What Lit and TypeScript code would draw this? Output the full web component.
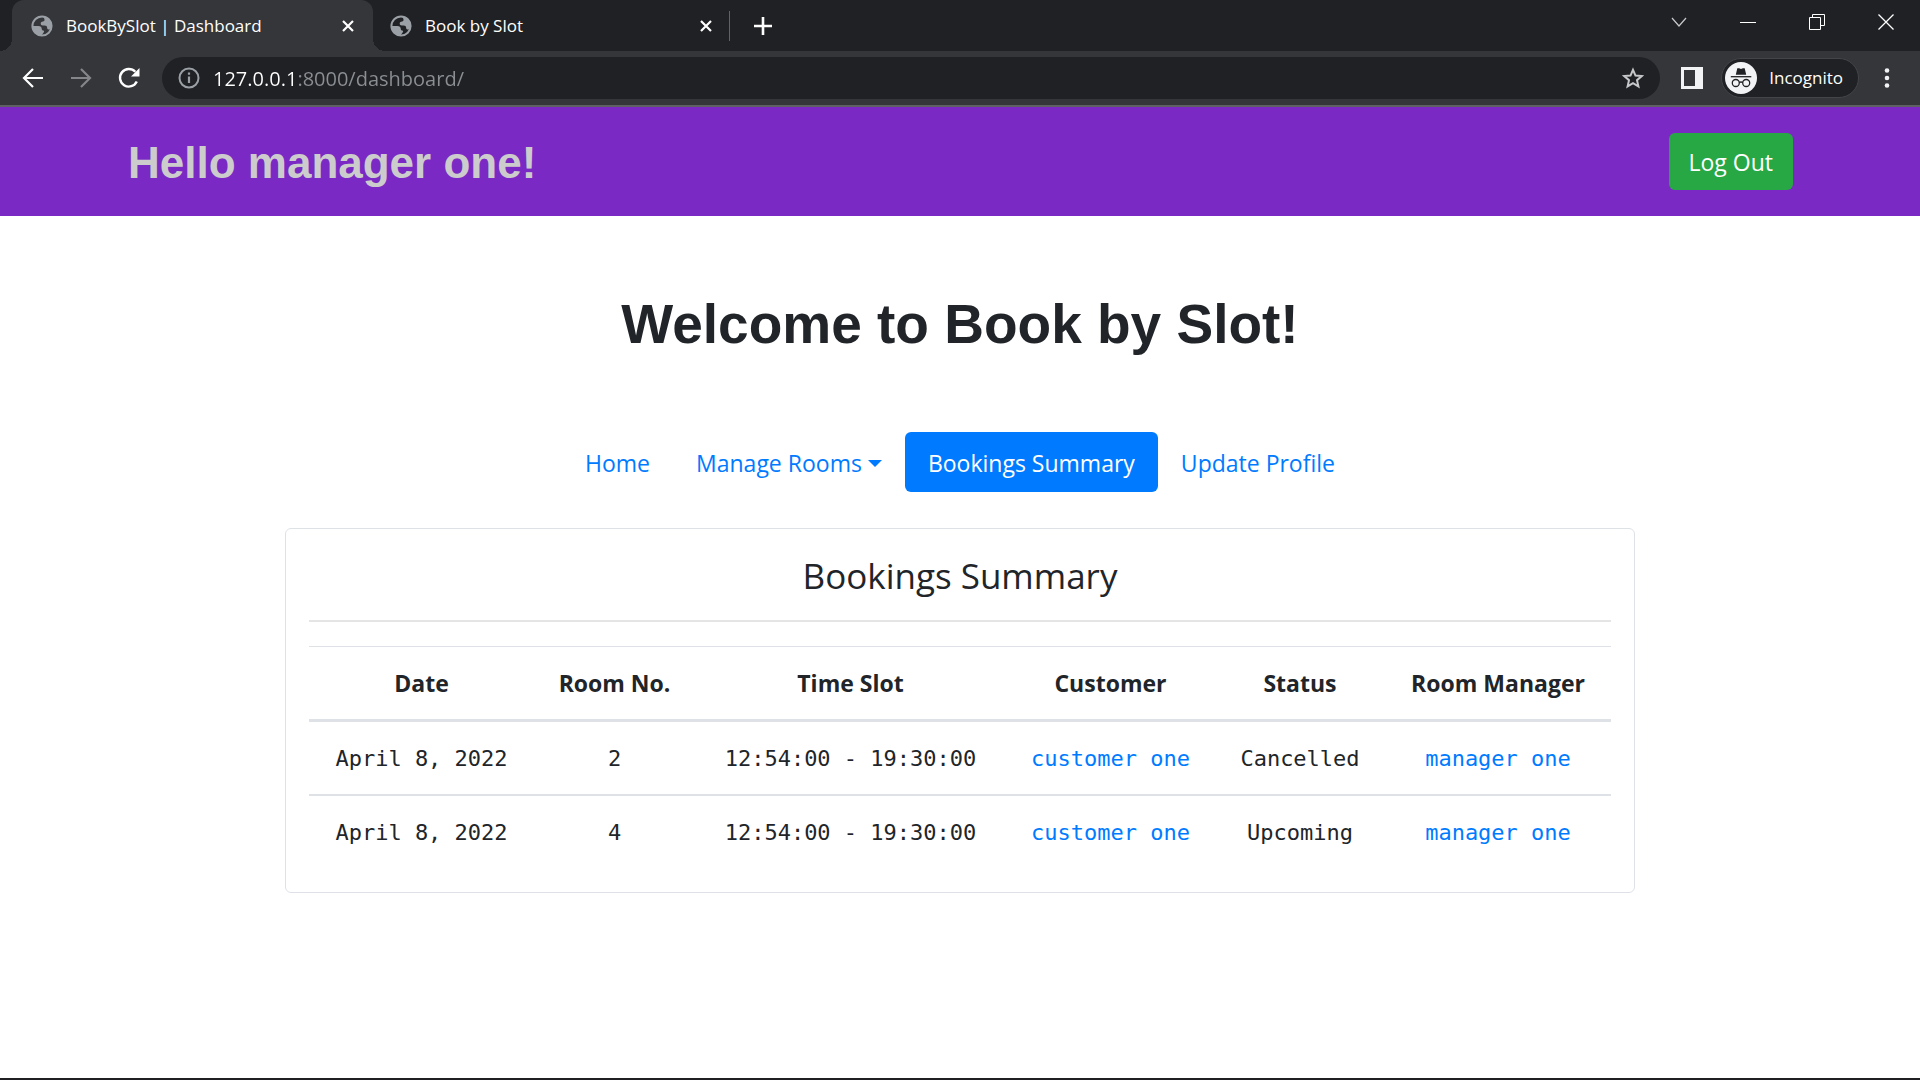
import { LitElement, html, css, svg } from "lit";
import { customElement } from "lit/decorators.js";

interface Booking {
  date: string;
  room: string;
  slot: string;
  customer: string;
  status: string;
  manager: string;
}

const bookings: Booking[] = [
  { date: "April 8, 2022", room: "2", slot: "12:54:00 - 19:30:00", customer: "customer one", status: "Cancelled", manager: "manager one" },
  { date: "April 8, 2022", room: "4", slot: "12:54:00 - 19:30:00", customer: "customer one", status: "Upcoming", manager: "manager one" },
];

const columns = [
  { key: "date", label: "Date" },
  { key: "room", label: "Room No." },
  { key: "slot", label: "Time Slot" },
  { key: "customer", label: "Customer" },
  { key: "status", label: "Status" },
  { key: "manager", label: "Room Manager" },
];

const icon = (size: number, content: unknown, box = size) => html`
  <svg width=${size} height=${size} viewBox="0 0 ${box} ${box}" fill="none" aria-hidden="true">${content}</svg>
`;

const globe = icon(22, svg`
  <circle cx="11" cy="11" r="9.6" stroke="#9aa0a6" stroke-width="2"/>
  <path fill="#9aa0a6" d="M13.2 1.6C17.5 2.4 20.8 6.2 20.8 11c0 .9-.1 1.8-.4 2.6-.8.9-2 1.2-3 .9-1-.3-1.300-1-1.300-2 0-1.200-1-2-2.300-2h-2c-1.400 0-2.100-.8-2.100-2 0-1.400 1-2.100 2.300-2.100 1 0 1.500-.7 1.500-1.600 0-1-.6-1.500-.6-2.200z"/>
  <path fill="#9aa0a6" d="M1.300 11h6.200c2 0 3.300 1.200 3.300 3 0 1 .7 1.400 1.500 1.600.8.3 1 1 .5 1.700l-2.300 3.300C5.400 20.300 1.300 16.300 1.300 11z"/>
`);
const cross = icon(14, svg`<path d="M2 2l10 10M12 2L2 12" stroke="#fff" stroke-width="2.2"/>`);

@customElement("browser-chrome")
export class BrowserChrome extends LitElement {
  static styles = css`
    :host { display: block; font-family: "Open Sans", "Noto Sans", sans-serif; color: #fff; }
    button { border: 0; padding: 0; background: none; color: inherit; font: inherit; display: flex; align-items: center; justify-content: center; }
    svg { display: block; flex: none; }
    .strip { display: flex; height: 51px; padding-left: 12px; background: #202124; }
    .tab { display: flex; align-items: center; width: 361px; padding: 0 18px 0 19px; gap: 13px; font-size: 17px; line-height: 24px; box-sizing: border-box; }
    .tab.active { position: relative; background: #35363a; border-radius: 12px 12px 0 0; }
    .tab.active::before, .tab.active::after { content: ""; position: absolute; bottom: 0; width: 12px; height: 12px; }
    .tab.active::before { right: 100%; background: radial-gradient(circle at 0 0, #202124 12px, #35363a 12px); }
    .tab.active::after { left: 100%; background: radial-gradient(circle at 100% 0, #202124 12px, #35363a 12px); }
    .tab.idle { width: 356px; padding: 0 16px 0 17px; }
    .title { flex: 1; white-space: nowrap; }
    .divider { width: 1px; height: 30px; align-self: center; background: #5f6368; }
    .new { width: 66px; }
    .window { display: flex; margin-left: auto; height: 43px; }
    .window button { width: 69px; }
    .bar { display: flex; align-items: center; height: 54px; padding-right: 5px; background: #35363a; border-bottom: 2px solid #5f6063; }
    .tools { display: flex; width: 162px; padding-left: 9px; box-sizing: border-box; }
    .tools button { width: 48px; height: 42px; }
    .address { display: flex; align-items: center; flex: 1; height: 42px; padding: 0 16px; gap: 13px; border-radius: 21px; background: #202124; box-sizing: border-box; }
    .url { flex: 1; min-width: 0; border: 0; outline: 0; padding: 2px 0 0; height: 36px; font: 20px/36px "Open Sans", "Noto Sans", sans-serif;
      color: #9aa0a6; -webkit-text-fill-color: transparent; background: linear-gradient(90deg, #fff 82px, #8b8f94 82px); -webkit-background-clip: text; background-clip: text; }
    .panel { width: 61px; padding-left: 3px; }
    .profile { display: flex; align-items: center; height: 40px; padding: 0 15px 0 3px; gap: 12px; border: 1px solid #44454a; border-radius: 20px; background: #202124; font-size: 17px; box-sizing: border-box; }
    .more { width: 56px; }
  `;

  render() {
    return html`
      <div class="strip">
        <div class="tab active">${globe}<span class="title">BookBySlot | Dashboard</span><button aria-label="Close tab">${cross}</button></div>
        <div class="tab idle">${globe}<span class="title">Book by Slot</span><button aria-label="Close tab">${cross}</button></div>
        <span class="divider"></span>
        <button class="new" aria-label="New tab">${icon(18, svg`<path d="M9 0v18M0 9h18" stroke="#fff" stroke-width="2.6"/>`)}</button>
        <div class="window">
          <button aria-label="Search tabs">${icon(16, svg`<path d="M1 4l7 8 7-8" stroke="#c8c9cb" stroke-width="1.2"/>`)}</button>
          <button aria-label="Minimize">${icon(16, svg`<path d="M0 8.5h16" stroke="#fff"/>`)}</button>
          <button aria-label="Restore">${icon(16, svg`<path d="M.5 3.5h11v12H.5zM3.5 3.5v-3h12v11h-4" stroke="#fff"/>`)}</button>
          <button aria-label="Close window">${icon(16, svg`<path d="M.5.5l15 15M15.5.5l-15 15" stroke="#fff" stroke-width="1.3"/>`)}</button>
        </div>
      </div>
      <div class="bar">
        <div class="tools">
          <button aria-label="Back">${icon(22, svg`<path d="M21 11H2.500M11 2l-9 9 9 9" stroke="#fff" stroke-width="2.2"/>`)}</button>
          <button aria-label="Forward" disabled>${icon(22, svg`<path d="M1 11h18.500M11 2l9 9-9 9" stroke="#85868a" stroke-width="2.2"/>`)}</button>
          <button aria-label="Reload">${icon(22, svg`<path d="M18.800 14.500A8.800 8.800 0 1 1 17.300 4.800" stroke="#fff" stroke-width="2.4"/><path d="M21.500 1v8.500H13z" fill="#fff"/>`)}</button>
        </div>
        <div class="address">
          ${icon(22, svg`<circle cx="11" cy="11" r="9.5" stroke="#9aa0a6" stroke-width="2"/><path d="M11 9.500v6.500M11 5.500v2.300" stroke="#9aa0a6" stroke-width="2.2"/>`)}
          <input class="url" type="text" aria-label="Address" spellcheck="false" value="127.0.0.1:8000/dashboard/" />
          <button aria-label="Bookmark this page">${icon(22, svg`<path d="M11 2.800l2.500 5.800 6.200.5-4.700 4.100 1.400 6.200-5.400-3.300-5.400 3.300L7 13.200 2.300 9.100l6.200-.5z" stroke="#c6c8ca" stroke-width="2"/>`)}</button>
        </div>
        <button class="panel" aria-label="Side panel">${icon(22, svg`<path fill="#f1f3f4" fill-rule="evenodd" d="M0 0h22v22H0zM3 3v16h11V3z"/>`)}</button>
        <button class="profile">
          ${icon(32, svg`<circle cx="16" cy="16" r="16" fill="#f1f3f4"/>
            <path d="M12.300 6.300h1.800l1.900.6 1.900-.6h1.800l1.500 6.400H10.800z" fill="#202124"/>
            <path d="M5.800 14.700h20.500" stroke="#202124" stroke-width="1.3"/>
            <circle cx="10.800" cy="21" r="3.500" stroke="#202124" stroke-width="1.3"/><circle cx="21.200" cy="21" r="3.500" stroke="#202124" stroke-width="1.3"/>
            <path d="M14.200 20.500q1.800-1 3.600 0" stroke="#202124" stroke-width="1.3"/>`)}
          <span>Incognito</span>
        </button>
        <button class="more" aria-label="Menu">${icon(22, svg`<g fill="#f1f3f4"><circle cx="11" cy="3.5" r="2.3"/><circle cx="11" cy="11" r="2.3"/><circle cx="11" cy="18.5" r="2.3"/></g>`)}</button>
      </div>
    `;
  }
}

@customElement("app-root")
export class AppRoot extends LitElement {
  static styles = css`
    :host { display: flex; flex-direction: column; min-height: 100vh; box-sizing: border-box; border-bottom: 2px solid #202024; background: #fff; color: #212529; font: 23px/36px "Open Sans", "Noto Sans", sans-serif; }
    h1, h2, h3 { margin: 0; }
    a { color: #007bff; text-decoration: none; }
    .masthead { display: flex; align-items: center; justify-content: space-between; height: 109px; padding: 0 127px 0 128px; background: #7b29c4; box-sizing: border-box; }
    .hello { padding-top: 3px; color: #ccc; font: bold 44px/60px "Liberation Sans", Arial, sans-serif; }
    .logout { height: 57px; padding: 0 20px; border: 0; border-radius: 6px; background: #28a745; color: #fff; font: inherit; }
    .page { display: flex; flex-direction: column; align-items: center; padding: 72px 24px; }
    .welcome { font: bold 55px/72px "Liberation Sans", Arial, sans-serif; }
    .nav { display: flex; margin: 72px 0 36px; }
    .link { display: flex; align-items: center; padding: 13px 23px 11px; gap: 6px; }
    .link.current { border-radius: 6px; background: #007bff; color: #fff; }
    .caret { border: 7px solid transparent; border-top-color: currentColor; border-bottom: 0; }
    .card { width: 100%; max-width: 1350px; padding: 24px 23px; border: 1px solid #dee2e6; border-radius: 6px; box-sizing: border-box; }
    .heading { padding-top: 1px; font-size: 35px; line-height: 43px; font-weight: 500; text-align: center; }
    .rule { height: 2px; margin: 23px 0 24px; border: 0; background: #e5e5e5; }
    .table { width: 100%; table-layout: fixed; border-collapse: separate; border-spacing: 0; text-align: center; }
    .table th { height: 36px; padding: 18px 0; border-top: 1px solid #dee2e6; border-bottom: 3px solid #dee2e6; font-weight: 700; font-size: 23px; }
    .table td { height: 36px; padding: 19px 0 17px; font: 22px/36px "DejaVu Sans Mono", "Liberation Mono", monospace; }
    .table tr + tr td { border-top: 2px solid #dee2e6; }
    .date { width: 225px; }
    .room { width: 161px; }
    .slot { width: 311px; }
    .customer { width: 209px; }
    .status { width: 170px; }
    .manager { width: 226px; }
  `;

  render() {
    return html`
      <browser-chrome></browser-chrome>
      <header class="masthead">
        <h2 class="hello">Hello manager one!</h2>
        <button class="logout">Log Out</button>
      </header>
      <main class="page">
        <h1 class="welcome">Welcome to Book by Slot!</h1>
        <nav class="nav">
          <a class="link" href="#home">Home</a>
          <a class="link" href="#rooms">Manage Rooms<span class="caret"></span></a>
          <a class="link current" href="#bookings" aria-current="page">Bookings Summary</a>
          <a class="link" href="#profile">Update Profile</a>
        </nav>
        <section class="card">
          <h3 class="heading">Bookings Summary</h3>
          <hr class="rule" />
          <table class="table">
            <colgroup>${columns.map((c) => html`<col class=${c.key} />`)}</colgroup>
            <thead><tr>${columns.map((c) => html`<th scope="col">${c.label}</th>`)}</tr></thead>
            <tbody>
              ${bookings.map((b) => html`
                <tr>
                  <td>${b.date}</td><td>${b.room}</td><td>${b.slot}</td>
                  <td><a href="#customer">${b.customer}</a></td>
                  <td>${b.status}</td>
                  <td><a href="#manager">${b.manager}</a></td>
                </tr>`)}
            </tbody>
          </table>
        </section>
      </main>
    `;
  }
}
